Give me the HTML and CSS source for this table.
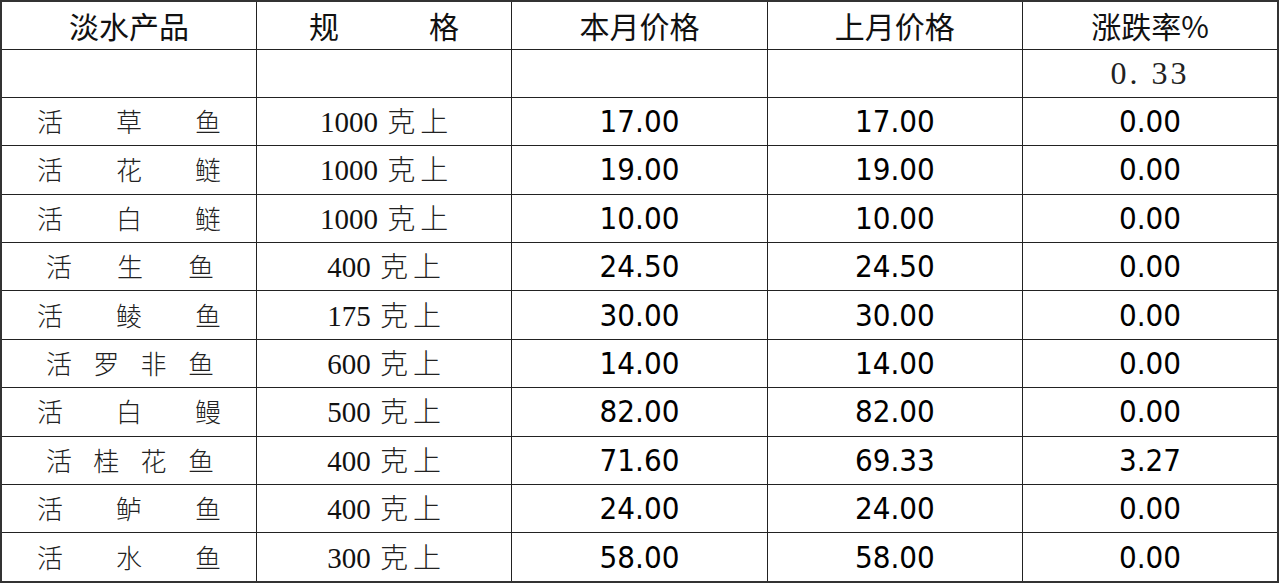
FILE: index.html
```html
<!DOCTYPE html>
<html lang="zh-CN">
<head>
<meta charset="utf-8">
<title>淡水产品价格</title>
<link rel="stylesheet" href="styles.css">
</head>
<body>
<table class="price-table">
  <colgroup><col><col><col><col><col></colgroup>
  <thead>
    <tr>
      <th>淡水产品</th>
      <th>规　　　格</th>
      <th>本月价格</th>
      <th>上月价格</th>
      <th>涨跌率%</th>
    </tr>
  </thead>
  <tbody>
    <tr>
      <td></td><td></td><td></td><td></td>
      <td class="rate-total">0. 33</td>
    </tr>
    <tr>
      <td><span class="name wide"><span>活</span><span>草</span><span>鱼</span></span></td>
      <td class="spec">1000 <span class="unit">克上</span></td>
      <td class="num">17.00</td><td class="num">17.00</td><td class="num">0.00</td>
    </tr>
    <tr>
      <td><span class="name wide"><span>活</span><span>花</span><span>鲢</span></span></td>
      <td class="spec">1000 <span class="unit">克上</span></td>
      <td class="num">19.00</td><td class="num">19.00</td><td class="num">0.00</td>
    </tr>
    <tr>
      <td><span class="name wide"><span>活</span><span>白</span><span>鲢</span></span></td>
      <td class="spec">1000 <span class="unit">克上</span></td>
      <td class="num">10.00</td><td class="num">10.00</td><td class="num">0.00</td>
    </tr>
    <tr>
      <td><span class="name narrow"><span>活</span><span>生</span><span>鱼</span></span></td>
      <td class="spec">400 <span class="unit">克上</span></td>
      <td class="num">24.50</td><td class="num">24.50</td><td class="num">0.00</td>
    </tr>
    <tr>
      <td><span class="name wide"><span>活</span><span>鲮</span><span>鱼</span></span></td>
      <td class="spec">175 <span class="unit">克上</span></td>
      <td class="num">30.00</td><td class="num">30.00</td><td class="num">0.00</td>
    </tr>
    <tr>
      <td><span class="name narrow"><span>活</span><span>罗</span><span>非</span><span>鱼</span></span></td>
      <td class="spec">600 <span class="unit">克上</span></td>
      <td class="num">14.00</td><td class="num">14.00</td><td class="num">0.00</td>
    </tr>
    <tr>
      <td><span class="name wide"><span>活</span><span>白</span><span>鳗</span></span></td>
      <td class="spec">500 <span class="unit">克上</span></td>
      <td class="num">82.00</td><td class="num">82.00</td><td class="num">0.00</td>
    </tr>
    <tr>
      <td><span class="name narrow"><span>活</span><span>桂</span><span>花</span><span>鱼</span></span></td>
      <td class="spec">400 <span class="unit">克上</span></td>
      <td class="num">71.60</td><td class="num">69.33</td><td class="num">3.27</td>
    </tr>
    <tr>
      <td><span class="name wide"><span>活</span><span>鲈</span><span>鱼</span></span></td>
      <td class="spec">400 <span class="unit">克上</span></td>
      <td class="num">24.00</td><td class="num">24.00</td><td class="num">0.00</td>
    </tr>
    <tr>
      <td><span class="name wide"><span>活</span><span>水</span><span>鱼</span></span></td>
      <td class="spec">300 <span class="unit">克上</span></td>
      <td class="num">58.00</td><td class="num">58.00</td><td class="num">0.00</td>
    </tr>
  </tbody>
</table>
</body>
</html>
```
FILE: styles.css
```css
html, body {
  margin: 0;
  padding: 0;
  background: #fff;
}

body {
  font-family: "Liberation Serif", "Noto Sans CJK SC", serif;
  color: #111;
}

.price-table {
  width: 1279px;
  height: 583px;
  table-layout: fixed;
  border-collapse: collapse;
  border: 2px solid #333;
}

.price-table col {
  width: 20%;
}

.price-table th,
.price-table td {
  border: 1.5px solid #222;
  height: 40px;
  padding: 0;
  text-align: center;
  vertical-align: middle;
  line-height: 1;
  white-space: nowrap;
}

.price-table th {
  height: 46.5px;
  font-family: "Noto Sans CJK SC", "Noto Sans", sans-serif;
  font-weight: 400;
  font-size: 30px;
  color: #111;
}

.name {
  display: inline-flex;
  justify-content: space-between;
  font-family: "Noto Sans CJK SC", sans-serif;
  font-weight: 300;
  font-size: 26px;
  color: #222;
}

.name.wide {
  width: 184px;
}

.name.narrow {
  width: 168px;
  margin-left: 2px;
}

.spec {
  font-family: "Liberation Serif", "Noto Sans CJK SC", serif;
  font-size: 29px;
  color: #111;
}

.unit {
  font-family: "Noto Sans CJK SC", sans-serif;
  font-weight: 300;
  font-size: 28px;
  letter-spacing: 5px;
  margin-left: 2px;
  margin-right: -5px;
  color: #222;
}

.num {
  font-family: "DejaVu Sans Condensed", "DejaVu Sans", sans-serif;
  font-stretch: condensed;
  font-size: 31px;
  color: #000;
  padding-top: 4px;
}

.rate-total {
  font-family: "Liberation Serif", serif;
  font-size: 32px;
  letter-spacing: 3px;
  color: #222;
  padding-right: 10px;
  padding-top: 2px;
}
```
